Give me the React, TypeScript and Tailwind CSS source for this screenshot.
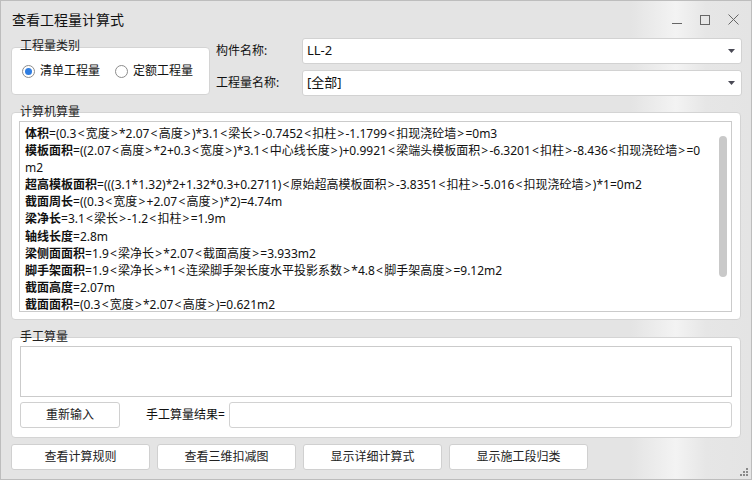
import React from "react";

const lines: [string, string][] = [
  ["体积", "=(0.3<宽度>*2.07<高度>)*3.1<梁长>-0.7452<扣柱>-1.1799<扣现浇砼墙>=0m3"],
  ["模板面积", "=((2.07<高度>*2+0.3<宽度>)*3.1<中心线长度>)+0.9921<梁端头模板面积>-6.3201<扣柱>-8.436<扣现浇砼墙>=0"],
  ["", "m2"],
  ["超高模板面积", "=(((3.1*1.32)*2+1.32*0.3+0.2711)<原始超高模板面积>-3.8351<扣柱>-5.016<扣现浇砼墙>)*1=0m2"],
  ["截面周长", "=((0.3<宽度>+2.07<高度>)*2)=4.74m"],
  ["梁净长", "=3.1<梁长>-1.2<扣柱>=1.9m"],
  ["轴线长度", "=2.8m"],
  ["梁侧面面积", "=1.9<梁净长>*2.07<截面高度>=3.933m2"],
  ["脚手架面积", "=1.9<梁净长>*1<连梁脚手架长度水平投影系数>*4.8<脚手架高度>=9.12m2"],
  ["截面高度", "=2.07m"],
  ["截面面积", "=(0.3<宽度>*2.07<高度>)=0.621m2"],
];

// angle brackets are a bit wider in the original font
function Formula({ text }: { text: string }) {
  const parts = text.split(/([<>])/);
  return (
    <>
      {parts.map((p, i) =>
        p === "<" || p === ">" ? (
          <span key={i} className="mx-[1.2px]">
            {p}
          </span>
        ) : (
          <React.Fragment key={i}>{p}</React.Fragment>
        )
      )}
    </>
  );
}

function Radio({ checked, label }: { checked?: boolean; label: string }) {
  return (
    <label className="flex items-center gap-[5px]">
      <span className="w-[13px] h-[13px] rounded-full border border-[#8c8c8c] bg-white flex items-center justify-center">
        {checked && <span className="w-[7px] h-[7px] rounded-full bg-[#2f7de1]" />}
      </span>
      <span>{label}</span>
    </label>
  );
}

function Select({ value }: { value: string }) {
  return (
    <div className="h-[26px] flex-1 bg-white border border-[#d2d2d2] rounded-[3px] flex items-center pl-[4px] pr-[6px]">
      <span className="flex-1 text-[13px]">{value}</span>
      <svg width="7" height="4" viewBox="0 0 7 4">
        <path d="M0 0h7L3.5 4z" fill="#4a4a55" />
      </svg>
    </div>
  );
}

function Btn({ children, w }: { children: React.ReactNode; w: string }) {
  return (
    <button className={`${w} h-[26px] bg-white border border-[#d0d0d0] rounded-[3px] text-[12px] text-[#222]`}>
      {children}
    </button>
  );
}

export default function App() {
  return (
    <div className="w-[752px] h-[480px] bg-[#e5e5e5] bg-[linear-gradient(90deg,#e4e4e4_0%,#e4e4e4_84%,#f3f3f3_90%,#e6e6e6_94%,#e4e4e4_100%)] border border-[#bdbdbd] flex flex-col relative overflow-hidden text-[12px] text-[#111] font-['Noto_Sans','Noto_Sans_CJK_SC',sans-serif]">
      {/* title bar */}
      <div className="h-[37px] flex items-center pl-[11px] pr-[12px]">
        <span className="text-[14px] flex-1 pb-[1px]">查看工程量计算式</span>
        <div className="flex items-center gap-[18px]">
          <svg width="10" height="10" viewBox="0 0 10 10">
            <path d="M0 8.5h10" stroke="#666" strokeWidth="1" />
          </svg>
          <svg width="10" height="10" viewBox="0 0 10 10">
            <rect x="0.5" y="0.5" width="9" height="9" fill="none" stroke="#666" strokeWidth="1" />
          </svg>
          <svg width="11" height="11" viewBox="0 0 11 11">
            <path d="M0.5 0.5l10 10M10.5 0.5l-10 10" stroke="#666" strokeWidth="1" />
          </svg>
        </div>
      </div>

      {/* top row */}
      <div className="flex pl-[10px] pr-[9px]">
        <div className="w-[199px] pt-[9px]">
          <div className="relative h-[48px] bg-white border border-[#d4d4d4] rounded-[4px] flex items-center gap-[15px] pl-[10px] text-[12px]">
            <span className="absolute left-[8px] top-[-11px] text-[12px] text-[#222]">工程量类别</span>
            <Radio checked label="清单工程量" />
            <Radio label="定额工程量" />
          </div>
        </div>
        <div className="flex-1 flex flex-col gap-[6px] pl-[6px]">
          <div className="flex items-center">
            <span className="w-[86px]">构件名称:</span>
            <Select value="LL-2" />
          </div>
          <div className="flex items-center">
            <span className="w-[86px]">工程量名称:</span>
            <Select value="[全部]" />
          </div>
        </div>
      </div>

      {/* computer calculation */}
      <div className="mx-[10px] mt-[16px] relative h-[208px] bg-white border border-[#d4d4d4] rounded-[4px] pl-[7px] pr-[8px] pt-[8px]">
        <span className="absolute left-[8px] top-[-10px] text-[12px] text-[#222]">计算机算量</span>
        <div className="relative h-[191px] border border-[#cbcbcb] overflow-hidden pl-[5px] pt-[3px]">
          {lines.map(([b, r], i) => (
            <div key={i} className="whitespace-nowrap leading-[17.1px] text-[12px]">
              {b && <span className="font-bold">{b}</span>}
              <Formula text={r} />
            </div>
          ))}
          <div className="absolute right-[4px] top-[14px] w-[8px] h-[141px] rounded-[4px] bg-[#c9c9c9]" />
        </div>
      </div>

      {/* manual */}
      <div className="mx-[10px] mt-[17px] relative h-[101px] bg-white border border-[#d4d4d4] rounded-[4px] px-[8px] pt-[8px]">
        <span className="absolute left-[8px] top-[-10px] text-[12px] text-[#222]">手工算量</span>
        <div className="h-[51px] border border-[#cbcbcb] bg-white" />
        <div className="flex items-center mt-[5px]">
          <Btn w="w-[100px]">重新输入</Btn>
          <span className="ml-[26px] mr-[4px] text-[12px]">手工算量结果=</span>
          <div className="flex-1 h-[26px] border border-[#d2d2d2] rounded-[3px] bg-white" />
        </div>
      </div>

      {/* bottom buttons */}
      <div className="flex gap-[7px] pl-[10px] mt-[6px]">
        <Btn w="w-[139px]">查看计算规则</Btn>
        <Btn w="w-[139px]">查看三维扣减图</Btn>
        <Btn w="w-[139px]">显示详细计算式</Btn>
        <Btn w="w-[139px]">显示施工段归类</Btn>
      </div>

      <svg className="absolute right-[3px] bottom-[3px]" width="8" height="8" viewBox="0 0 8 8">
        <g fill="#8a8a8a">
          <rect x="6" y="0" width="2" height="2" />
          <rect x="3" y="3" width="2" height="2" />
          <rect x="6" y="3" width="2" height="2" />
          <rect x="0" y="6" width="2" height="2" />
          <rect x="3" y="6" width="2" height="2" />
          <rect x="6" y="6" width="2" height="2" />
        </g>
      </svg>
    </div>
  );
}
